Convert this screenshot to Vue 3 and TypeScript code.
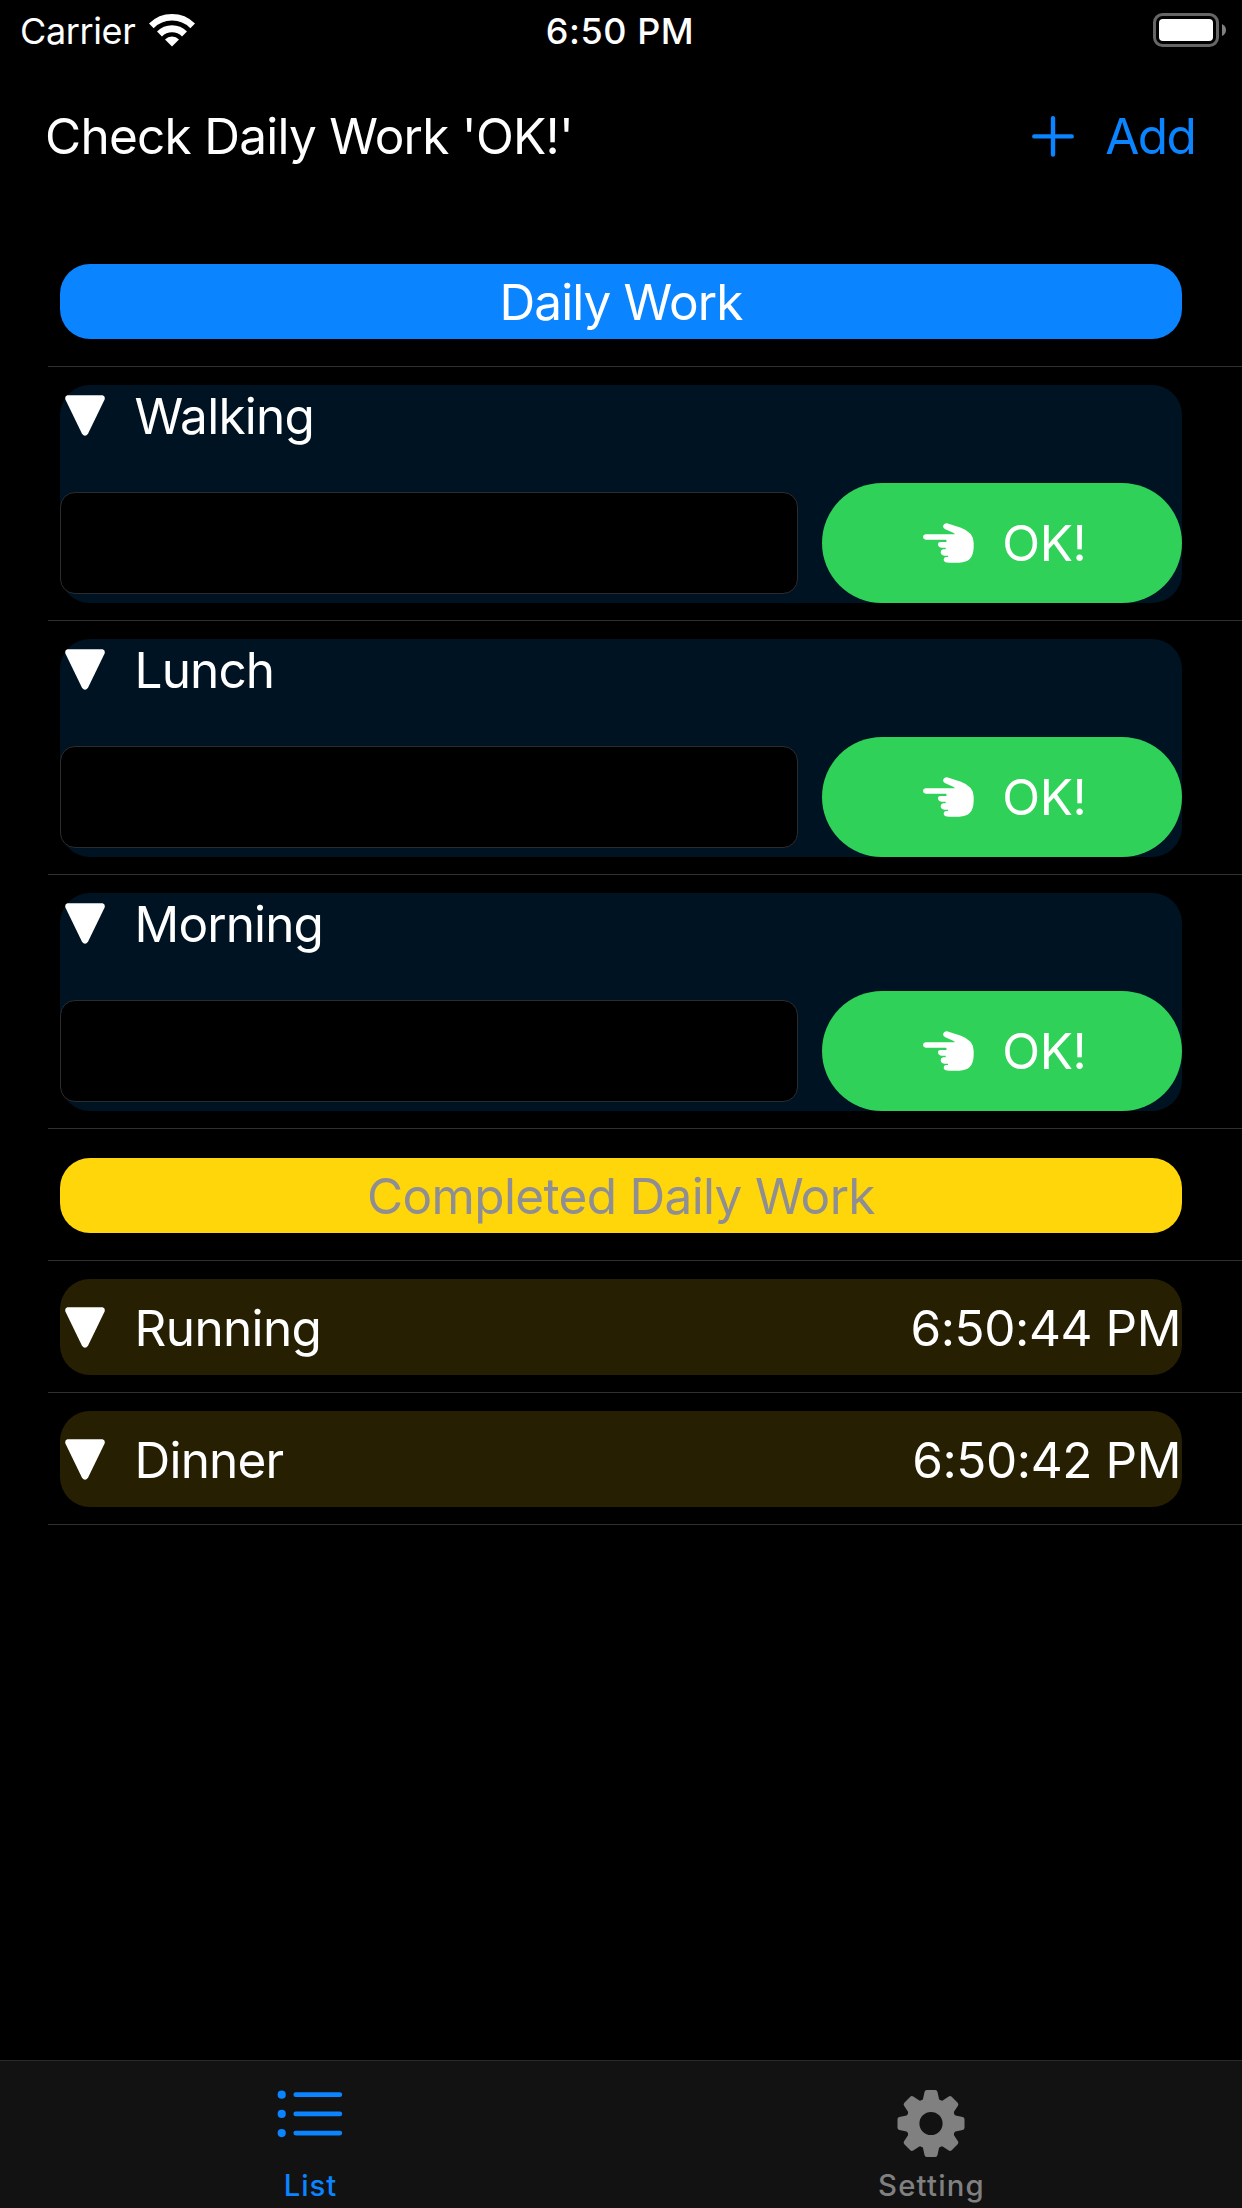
<script setup lang="ts">
import { ref } from 'vue'

interface Work {
  name: string
  tracking: number
  note: string
}

interface CompletedWork {
  name: string
  tracking: number
  time: string
}

const works = ref<Work[]>([
  { name: 'Walking', tracking: -0.75, note: '' },
  { name: 'Lunch', tracking: -0.9, note: '' },
  { name: 'Morning', tracking: -0.9, note: '' },
])

const completed = ref<CompletedWork[]>([
  { name: 'Running', tracking: -0.65, time: '6:50:44 PM' },
  { name: 'Dinner', tracking: -0.84, time: '6:50:42 PM' },
])

const gearAngles = [0, 45, 90, 135, 180, 225, 270, 315]
</script>

<template>
  <div class="screen">
    <header class="status">
      <div class="status-side">
        <span class="carrier">Carrier</span>
        <svg class="wifi" width="46" height="34" viewBox="-23 -33.5 46 34">
          <g fill="none" stroke="#fff">
            <path d="M-20.7-20.7A29.3 29.3 0 0 1 20.7-20.7" stroke-width="6.6" />
            <path d="M-12.5-12.5A17.8 17.8 0 0 1 12.5-12.5" stroke-width="7" />
          </g>
          <path d="M0 0L-7-7A9.9 9.9 0 0 1 7-7Z" fill="#fff" />
        </svg>
      </div>
      <span class="clock">6:50 PM</span>
      <div class="status-side right">
        <svg class="battery" width="74" height="34" viewBox="0 0 74 34">
          <rect x="1.5" y="1.5" width="63" height="31" rx="8" fill="none" stroke="#666" stroke-width="3" />
          <rect x="6" y="6" width="54" height="22" rx="4" fill="#fff" />
          <path d="M69 11Q73 13 73 17T69 23Z" fill="#808080" />
        </svg>
      </div>
    </header>

    <div class="navbar">
      <h1>Check Daily Work 'OK!'</h1>
      <button class="add" type="button">
        <svg width="42" height="42" viewBox="0 0 42 42">
          <path d="M21 3.2V39.6M2.3 21.4H39.7" stroke="#0a84ff" stroke-width="4.4" stroke-linecap="round" />
        </svg>
        <span>Add</span>
      </button>
    </div>

    <main class="list">
      <div class="row heading first">
        <h2 class="pill blue">Daily Work</h2>
      </div>

      <div v-for="work in works" :key="work.name" class="row">
        <section class="card">
          <div class="card-head">
            <svg class="triangle" width="40" height="41" viewBox="0 0 40 41">
              <path d="M2.4 0.3H37.6Q40.5 0.9 39.6 4.4L23 38.8Q20 42.6 17 38.8L0.4 4.4Q-0.5 0.9 2.4 0.3Z" fill="#fff" />
            </svg>
            <span class="name" :style="{ letterSpacing: work.tracking + 'px' }">{{ work.name }}</span>
          </div>
          <div class="card-body">
            <input v-model="work.note" class="note" type="text" />
            <button class="ok" type="button">
              <svg width="51" height="40" viewBox="69 70 153 120">
                <path
                  fill="#fff"
                  d="M77 104H164Q165 102 161 100L136 89Q129 86 129 79Q132 70 141 71L183 84Q221 98 221 129V143Q220 189 178 189H148Q131 189 131 180Q131 173 138 172H144V168H133Q122 167 122 158Q122 150 129 149H137V144H124Q114 143 114 134Q114 127 122 127H139Q141 122 138 120H77Q69 119 69 112Q69 105 77 104Z"
                />
              </svg>
              <span>OK!</span>
            </button>
          </div>
        </section>
      </div>

      <div class="row heading second">
        <h2 class="pill yellow">Completed Daily Work</h2>
      </div>

      <div v-for="work in completed" :key="work.name" class="row">
        <section class="done">
          <svg class="triangle" width="40" height="41" viewBox="0 0 40 41">
            <path d="M2.4 0.3H37.6Q40.5 0.9 39.6 4.4L23 38.8Q20 42.6 17 38.8L0.4 4.4Q-0.5 0.9 2.4 0.3Z" fill="#fff" />
          </svg>
          <span class="name" :style="{ letterSpacing: work.tracking + 'px' }">{{ work.name }}</span>
          <time>{{ work.time }}</time>
        </section>
      </div>
    </main>

    <nav class="tabs">
      <a class="tab active">
        <svg class="icon" width="67" height="67" viewBox="0 0 67 67">
          <g fill="#0a84ff">
            <circle cx="4.7" cy="4.7" r="4.1" />
            <circle cx="4.7" cy="23.9" r="4.1" />
            <circle cx="4.7" cy="43.1" r="4.1" />
          </g>
          <path d="M18.8 4.7H62.8M18.8 23.9H62.8M18.8 43.1H62.8" stroke="#0a84ff" stroke-width="4.8" stroke-linecap="round" />
        </svg>
        <span class="label list-label">List</span>
      </a>
      <a class="tab">
        <svg class="icon" width="69" height="67" viewBox="-34 -33.5 69 67">
          <circle r="18.3" fill="none" stroke="#808080" stroke-width="13.4" />
          <path
            v-for="angle in gearAngles"
            :key="angle"
            :transform="`rotate(${angle})`"
            d="M-4.2-33.5H4.2Q6.1-33.5 6.5-31.6L8-24.5Q8.6-22.8 11-22L8-20H-8L-11-22Q-8.6-22.8-8-24.5L-6.5-31.6Q-6.1-33.5-4.2-33.5Z"
            fill="#808080"
          />
        </svg>
        <span class="label setting-label">Setting</span>
      </a>
    </nav>
  </div>
</template>

<style>
html,
body {
  background: #000;
}
</style>

<style scoped>
.screen {
  display: flex;
  flex-direction: column;
  width: 1242px;
  height: 2208px;
  overflow: hidden;
  background: #000;
  color: #fff;
  font-family: Inter, "Liberation Sans", sans-serif;
  font-size: 49.5px;
  line-height: 62px;
}

h1,
h2 {
  margin: 0;
  font-size: inherit;
  font-weight: 400;
}

button,
input {
  box-sizing: border-box;
  margin: 0;
  padding: 0;
  border: 0;
  background: none;
  color: inherit;
  font: inherit;
}

svg {
  display: block;
  flex: none;
}

.status {
  display: flex;
  align-items: center;
  height: 62px;
  font-size: 36px;
}

.status-side {
  display: flex;
  flex: 1;
  box-sizing: border-box;
  align-items: center;
  padding-left: 20px;
}

.status-side.right {
  justify-content: flex-end;
  padding: 0 15px 2px 0;
}

.carrier {
  letter-spacing: -0.38px;
}

.wifi {
  margin: 0 0 3px 14px;
}

.clock {
  margin: 0 4px 0 -3px;
  font-weight: 500;
  letter-spacing: 0.55px;
}

.navbar {
  display: flex;
  align-items: center;
  justify-content: space-between;
  height: 148px;
  padding: 0 47px 0 45px;
}

h1 {
  letter-spacing: -0.75px;
}

.add {
  display: flex;
  align-items: center;
  gap: 31px;
  color: #0a84ff;
  letter-spacing: -1.7px;
}

.list {
  flex: 1;
  margin-left: 48px;
}

.row {
  padding: 18px 60px 17px 12px;
  border-bottom: 1px solid #303033;
}

.row.first {
  padding: 54px 60px 27px 12px;
}

.row.second {
  padding: 28.7px 60px 27.3px 12px;
}

.pill {
  height: 75px;
  border-radius: 30px;
  line-height: 77px;
  text-align: center;
}

.blue {
  background: #0a84ff;
  letter-spacing: -0.89px;
}

.yellow {
  background: #ffd60a;
  color: #8e8e93;
  letter-spacing: -0.67px;
}

.card {
  height: 218px;
  border-radius: 30px;
  background: #001323;
}

.card-head {
  display: flex;
  align-items: center;
  height: 62px;
  padding-left: 5px;
}

.card-head .triangle {
  margin-bottom: 1px;
}

.name {
  margin-left: 29.6px;
}

.card-body {
  display: flex;
  align-items: center;
  gap: 24px;
  margin-top: 36px;
}

.note {
  width: 738px;
  height: 102px;
  padding: 0 18px;
  border: 1px solid #2c2c2e;
  border-radius: 15px;
  background: #000;
  outline: none;
}

.ok {
  display: flex;
  flex: 1;
  align-items: center;
  height: 120px;
  padding-left: 101px;
  border-radius: 60px;
  background: #30d158;
  gap: 28.2px;
  letter-spacing: -0.4px;
}

.done {
  display: flex;
  align-items: center;
  box-sizing: border-box;
  height: 96px;
  padding: 2px 1px 0 5px;
  border-radius: 30px;
  background: #261f02;
}

.done .triangle {
  margin-bottom: 1px;
}

.done time {
  margin-left: auto;
  letter-spacing: -0.42px;
}

.tabs {
  display: flex;
  box-sizing: border-box;
  height: 148px;
  border-top: 1px solid #2a2a2b;
  background: #121212;
}

.tab {
  display: flex;
  flex: 1;
  flex-direction: column;
  align-items: center;
  padding-top: 29px;
  color: #808080;
}

.tab.active {
  color: #0a84ff;
}

.label {
  margin-top: 10px;
  font-size: 29.3px;
  font-weight: 500;
  line-height: 37px;
}

.list-label {
  letter-spacing: 1px;
}

.setting-label {
  letter-spacing: 1.2px;
}
</style>
